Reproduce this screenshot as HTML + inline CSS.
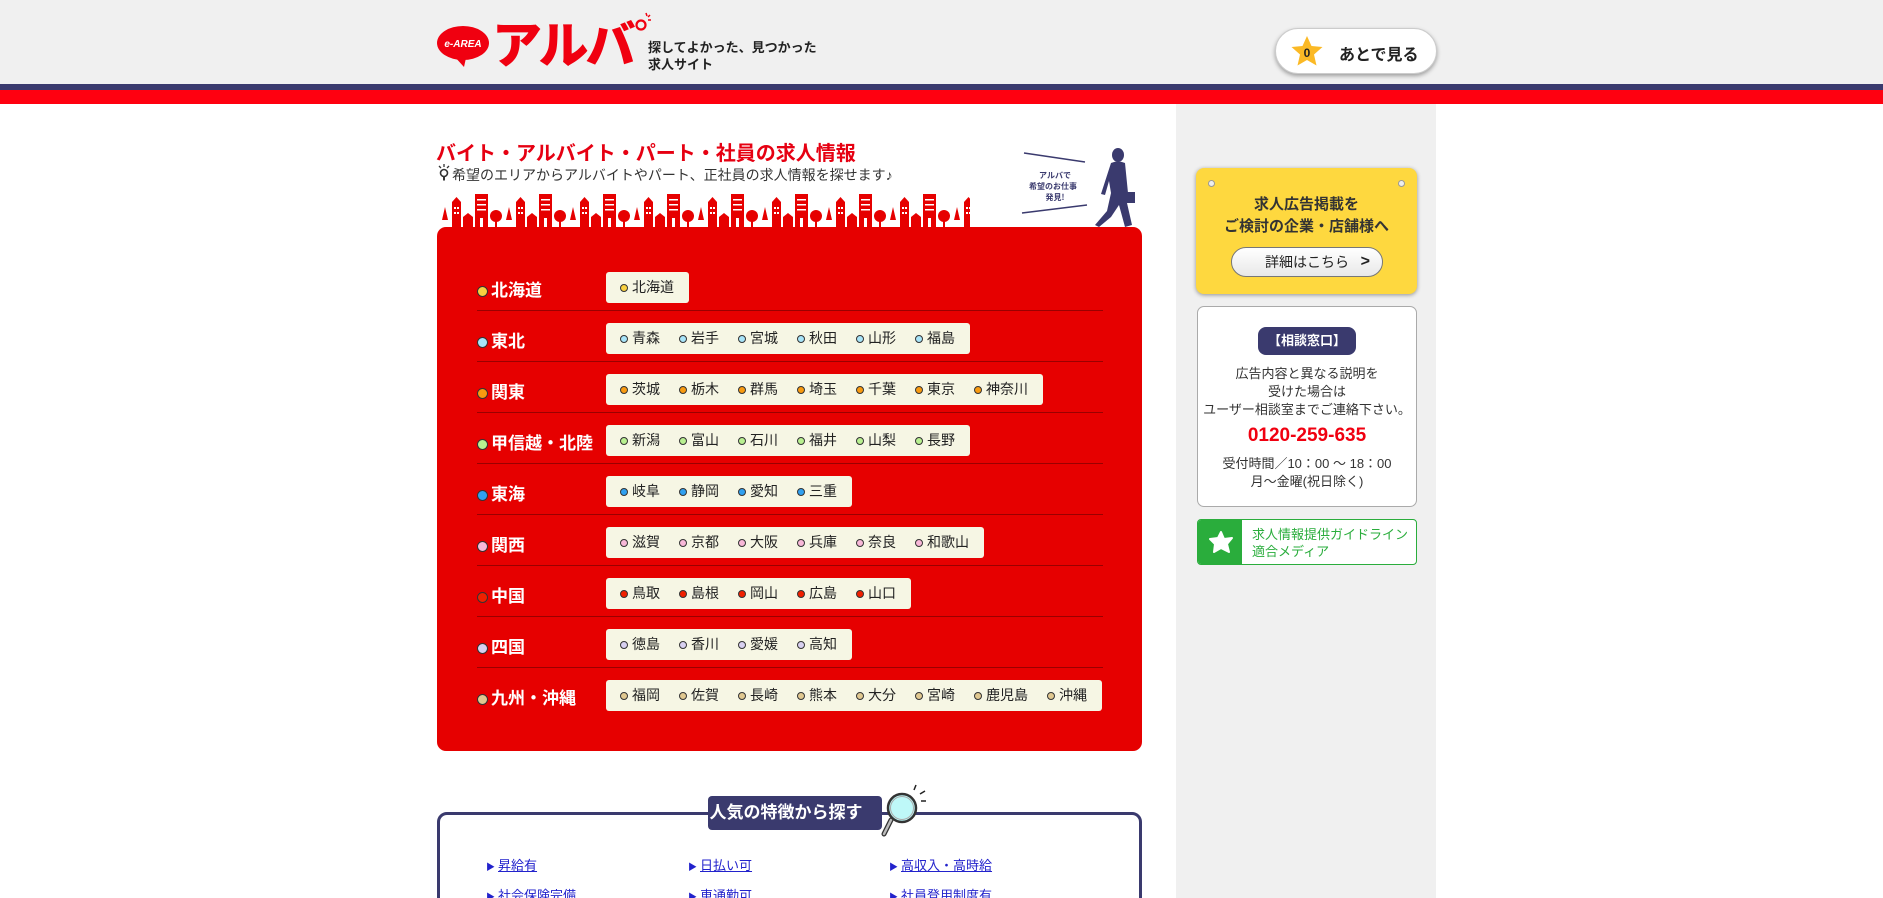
<!DOCTYPE html>
<html><head><meta charset="utf-8">
<style>
*{margin:0;padding:0;box-sizing:border-box}
html,body{width:1883px;height:898px;overflow:hidden}
body{background:#fff;font-family:"Liberation Sans","Noto Sans CJK JP",sans-serif;position:relative;color:#222}
.hdr{position:absolute;left:0;top:0;width:1883px;height:84px;background:#f0f0f0}
.navy{position:absolute;left:0;top:84px;width:1883px;height:6px;background:#3a3a6e}
.red{position:absolute;left:0;top:90px;width:1883px;height:14px;background:#ff0010}
.side{position:absolute;left:1176px;top:104px;width:260px;height:794px;background:#f0f0f0}
.abs{position:absolute}
.logo-txt{position:absolute;left:492px;top:14px;font-size:50px;font-weight:900;color:#f00010;letter-spacing:-3px;font-family:"Noto Sans CJK JP",sans-serif;line-height:56px}
.tag{position:absolute;left:648px;top:39px;font-size:13px;font-weight:bold;line-height:17px;color:#222}
.later{position:absolute;left:1275px;top:28px;width:162px;height:46px;border-radius:23px;background:#fff;border:1px solid #ccc;box-shadow:0 2px 4px rgba(0,0,0,.35);font-size:16px;font-weight:bold}
.title{position:absolute;left:436px;top:137px;font-size:20px;font-weight:bold;color:#e60012}
.sub{position:absolute;left:452px;top:165px;font-size:14px;color:#333}
.rbox{position:absolute;left:437px;top:227px;width:705px;height:524px;background:#e60000;border-radius:9px}
.row{position:absolute;left:40px;width:626px;height:51px;border-bottom:1px solid #9a0000}
.lab{position:absolute;left:0;top:21px;font-size:17px;font-weight:bold;color:#fff;line-height:20px}
.dot{display:inline-block;width:11px;height:11px;border-radius:50%;border:1px solid #333;vertical-align:-1px;margin-right:3px}
.pill{position:absolute;left:129px;top:12px;height:31px;background:#f6f6e4;border-radius:3px;padding:0 15px 0 14px;font-size:14px;line-height:31px;white-space:nowrap;color:#222}
.pill span{display:inline-block;margin-right:19px}
.pill span:last-child{margin-right:0}
.pill .d{display:inline-block;width:8px;height:8px;border-radius:50%;border:1px solid #333;margin-right:4px;vertical-align:0px}
.feat{position:absolute;left:437px;top:812px;width:705px;height:120px;border:3px solid #3a3a6e;border-radius:10px}
.ftab{position:absolute;left:708px;top:796px;width:174px;height:34px;background:#3a3a6e;border-radius:4px;color:#fff;font-size:17px;font-weight:bold;line-height:34px;text-align:center;padding-right:18px;white-space:nowrap}
.lk{position:absolute;font-size:13px;color:#2222cc;text-decoration:underline}
.lk:before{content:"▶";font-size:9px;text-decoration:none;display:inline-block;margin-right:3px;color:#2222cc}
</style></head><body>
<div class="hdr"></div><div class="navy"></div><div class="red"></div><div class="side"></div>

<svg class="abs" style="left:436px;top:24px" width="56" height="44" viewBox="0 0 56 44">
<ellipse cx="27" cy="19" rx="26" ry="17" fill="#f00010"/>
<path d="M18 32 L30 34 L28 43 Z" fill="#f00010"/>
<text x="27" y="23" font-size="10" font-weight="bold" font-style="italic" fill="#fff" text-anchor="middle" font-family="Liberation Sans">e-AREA</text>
</svg>
<div class="logo-txt">アルバ</div>
<svg class="abs" style="left:632px;top:10px" width="22" height="24"><circle cx="9" cy="15" r="4.5" fill="#f0f0f0" stroke="#f00010" stroke-width="2.2"/><path d="M14 3 l1 3 M18 5 l-2 2 M19 10 l-3 0" stroke="#f00010" stroke-width="1.5"/></svg>
<div class="tag">探してよかった、見つかった<br>求人サイト</div>

<div class="later">
<svg class="abs" style="left:14px;top:6px" width="34" height="32" viewBox="0 0 34 32"><path d="M17 1 L21.5 11 L32.5 12 L24 19.5 L26.5 30.5 L17 25 L7.5 30.5 L10 19.5 L1.5 12 L12.5 11 Z" fill="#fbb925"/><text x="17" y="22" font-size="12" font-weight="bold" text-anchor="middle" fill="#222" font-family="Liberation Sans">0</text></svg>
<span class="abs" style="left:63px;top:12px">あとで見る</span>
</div>

<div class="title">バイト・アルバイト・パート・社員の求人情報</div>
<svg class="abs" style="left:437px;top:164px" width="14" height="18"><path d="M2 2l2 2M7 0v3M12 2l-2 2" stroke="#333" stroke-width="1.3"/><circle cx="7" cy="9" r="3.5" fill="none" stroke="#333" stroke-width="1.6"/><path d="M7 12.5v4" stroke="#333" stroke-width="2"/></svg>
<div class="sub">希望のエリアからアルバイトやパート、正社員の求人情報を探せます♪</div>

<svg class="abs" style="left:440px;top:190px" width="540" height="38">
<defs><pattern id="sk" x="10" y="0" width="64" height="38" patternUnits="userSpaceOnUse">
<rect x="2" y="12" width="9" height="26" fill="#e60000"/><path d="M2 12 L6.5 7 L11 12Z" fill="#e60000"/>
<rect x="13" y="27" width="10" height="11" fill="#e60000"/><path d="M13 27 L18 23 L23 27Z" fill="#e60000"/>
<rect x="25" y="4" width="13" height="34" fill="#e60000"/>
<circle cx="46" cy="26" r="6" fill="#e60000"/><rect x="45" y="30" width="2" height="8" fill="#e60000"/>
<path d="M56 30 L59 17 L62 30Z" fill="#e60000"/>
<g fill="#fff"><rect x="4" y="17" width="2" height="2"/><rect x="7" y="17" width="2" height="2"/><rect x="4" y="22" width="2" height="2"/><rect x="7" y="22" width="2" height="2"/><rect x="27" y="9" width="9" height="1.5"/><rect x="27" y="14" width="9" height="1.5"/><rect x="27" y="19" width="9" height="1.5"/><rect x="30" y="28" width="3" height="10"/></g>
</pattern></defs>
<rect x="0" y="0" width="530" height="38" fill="url(#sk)"/>
</svg>
<svg class="abs" style="left:1015px;top:145px" width="120" height="85">
<path d="M9 8 L70 17 M7 68 L72 60" stroke="#3a3a6e" stroke-width="1.5"/>
<text x="40" y="33" font-size="8" font-weight="bold" fill="#3a3a6e" text-anchor="middle" font-family="Noto Sans CJK JP">アルバで</text>
<text x="38" y="44" font-size="8" font-weight="bold" fill="#3a3a6e" text-anchor="middle" font-family="Noto Sans CJK JP">希望のお仕事</text>
<text x="40" y="55" font-size="8" font-weight="bold" fill="#3a3a6e" text-anchor="middle" font-family="Noto Sans CJK JP">発見!</text>
<ellipse cx="103" cy="10" rx="6" ry="7" fill="#3a3a6e"/>
<path d="M96 18 Q103 15 110 18 L113 48 L112 58 L117 80 L110 82 L104 60 L96 72 L84 82 L80 80 L92 66 L96 48 L94 36 L90 50 L86 49 Z" fill="#3a3a6e"/>
<rect x="108" y="47" width="13" height="11" fill="#3a3a6e"/>
</svg>

<div class="rbox">
<div class="row" style="top:33px"><div class="lab"><span class="dot" style="background:#f8d040"></span>北海道</div><div class="pill"><span><i class="d" style="background:#f8d040"></i>北海道</span></div></div>
<div class="row" style="top:84px"><div class="lab"><span class="dot" style="background:#a8e4f8"></span>東北</div><div class="pill"><span><i class="d" style="background:#a8e4f8"></i>青森</span><span><i class="d" style="background:#a8e4f8"></i>岩手</span><span><i class="d" style="background:#a8e4f8"></i>宮城</span><span><i class="d" style="background:#a8e4f8"></i>秋田</span><span><i class="d" style="background:#a8e4f8"></i>山形</span><span><i class="d" style="background:#a8e4f8"></i>福島</span></div></div>
<div class="row" style="top:135px"><div class="lab"><span class="dot" style="background:#f89a10"></span>関東</div><div class="pill"><span><i class="d" style="background:#f89a10"></i>茨城</span><span><i class="d" style="background:#f89a10"></i>栃木</span><span><i class="d" style="background:#f89a10"></i>群馬</span><span><i class="d" style="background:#f89a10"></i>埼玉</span><span><i class="d" style="background:#f89a10"></i>千葉</span><span><i class="d" style="background:#f89a10"></i>東京</span><span><i class="d" style="background:#f89a10"></i>神奈川</span></div></div>
<div class="row" style="top:186px"><div class="lab"><span class="dot" style="background:#b8f090"></span>甲信越・北陸</div><div class="pill"><span><i class="d" style="background:#b8f090"></i>新潟</span><span><i class="d" style="background:#b8f090"></i>富山</span><span><i class="d" style="background:#b8f090"></i>石川</span><span><i class="d" style="background:#b8f090"></i>福井</span><span><i class="d" style="background:#b8f090"></i>山梨</span><span><i class="d" style="background:#b8f090"></i>長野</span></div></div>
<div class="row" style="top:237px"><div class="lab"><span class="dot" style="background:#30a0f0"></span>東海</div><div class="pill"><span><i class="d" style="background:#30a0f0"></i>岐阜</span><span><i class="d" style="background:#30a0f0"></i>静岡</span><span><i class="d" style="background:#30a0f0"></i>愛知</span><span><i class="d" style="background:#30a0f0"></i>三重</span></div></div>
<div class="row" style="top:288px"><div class="lab"><span class="dot" style="background:#f8b8d8"></span>関西</div><div class="pill"><span><i class="d" style="background:#f8b8d8"></i>滋賀</span><span><i class="d" style="background:#f8b8d8"></i>京都</span><span><i class="d" style="background:#f8b8d8"></i>大阪</span><span><i class="d" style="background:#f8b8d8"></i>兵庫</span><span><i class="d" style="background:#f8b8d8"></i>奈良</span><span><i class="d" style="background:#f8b8d8"></i>和歌山</span></div></div>
<div class="row" style="top:339px"><div class="lab"><span class="dot" style="background:#f02000"></span>中国</div><div class="pill"><span><i class="d" style="background:#f02000"></i>鳥取</span><span><i class="d" style="background:#f02000"></i>島根</span><span><i class="d" style="background:#f02000"></i>岡山</span><span><i class="d" style="background:#f02000"></i>広島</span><span><i class="d" style="background:#f02000"></i>山口</span></div></div>
<div class="row" style="top:390px"><div class="lab"><span class="dot" style="background:#d8d0f0"></span>四国</div><div class="pill"><span><i class="d" style="background:#d8d0f0"></i>徳島</span><span><i class="d" style="background:#d8d0f0"></i>香川</span><span><i class="d" style="background:#d8d0f0"></i>愛媛</span><span><i class="d" style="background:#d8d0f0"></i>高知</span></div></div>
<div class="row" style="top:441px;border-bottom:none"><div class="lab"><span class="dot" style="background:#e0c890"></span>九州・沖縄</div><div class="pill"><span><i class="d" style="background:#e0c890"></i>福岡</span><span><i class="d" style="background:#e0c890"></i>佐賀</span><span><i class="d" style="background:#e0c890"></i>長崎</span><span><i class="d" style="background:#e0c890"></i>熊本</span><span><i class="d" style="background:#e0c890"></i>大分</span><span><i class="d" style="background:#e0c890"></i>宮崎</span><span><i class="d" style="background:#e0c890"></i>鹿児島</span><span><i class="d" style="background:#e0c890"></i>沖縄</span></div></div>
</div>

<div class="feat"></div>
<div class="ftab">人気の特徴から探す</div>
<svg class="abs" style="left:878px;top:784px" width="60" height="56"><path d="M36 6l2-5M42 10l5-3M43 17l5 0" stroke="#222" stroke-width="1.5"/><path d="M13 36 L6 50" stroke="#333" stroke-width="5" stroke-linecap="round"/><path d="M13 36 L6 50" stroke="#bbb" stroke-width="2.5" stroke-linecap="round"/><circle cx="24" cy="24" r="14" fill="#bef8f8" stroke="#333" stroke-width="2.5"/><circle cx="24" cy="24" r="11.5" fill="none" stroke="#aaa" stroke-width="1"/></svg>
<a class="lk" style="left:486px;top:855px">昇給有</a>
<a class="lk" style="left:688px;top:855px">日払い可</a>
<a class="lk" style="left:889px;top:855px">高収入・高時給</a>
<a class="lk" style="left:486px;top:885px">社会保険完備</a>
<a class="lk" style="left:688px;top:885px">車通勤可</a>
<a class="lk" style="left:889px;top:885px">社員登用制度有</a>

<div class="abs" style="left:1196px;top:168px;width:221px;height:126px;background:#fed83f;border-radius:8px;box-shadow:0 1px 4px rgba(0,0,0,.4)">
<i class="abs" style="left:12px;top:12px;width:7px;height:7px;border-radius:50%;background:#eee;border:1px solid #999"></i>
<i class="abs" style="left:202px;top:12px;width:7px;height:7px;border-radius:50%;background:#eee;border:1px solid #999"></i>
<div class="abs" style="left:0;top:26px;width:221px;text-align:center;font-size:15px;font-weight:bold;line-height:22px;color:#333">求人広告掲載を<br>ご検討の企業・店舗様へ</div>
<div class="abs" style="left:35px;top:79px;width:152px;height:30px;border-radius:15px;background:linear-gradient(#fff,#e8e8e8);border:1px solid #777;font-size:14px;line-height:28px;padding-left:33px;color:#222">詳細はこちら<b class="abs" style="right:12px;top:0;font-size:16px">&gt;</b></div>
</div>
<div class="abs" style="left:1197px;top:306px;width:220px;height:201px;background:#fff;border:1px solid #aaa;border-radius:7px;text-align:center;color:#333">
<div class="abs" style="left:60px;top:20px;width:98px;height:28px;background:#3a3a6e;border-radius:8px;color:#fff;font-size:13px;font-weight:bold;line-height:28px">【相談窓口】</div>
<div class="abs" style="left:0;top:58px;width:218px;font-size:13px;line-height:18px">広告内容と異なる説明を<br>受けた場合は<br>ユーザー相談室までご連絡下さい。</div>
<div class="abs" style="left:0;top:118px;width:218px;font-size:19px;font-weight:bold;color:#f00010">0120-259-635</div>
<div class="abs" style="left:0;top:148px;width:218px;font-size:13px;line-height:18px">受付時間／10：00 ～ 18：00<br>月～金曜(祝日除く)</div>
</div>
<div class="abs" style="left:1197px;top:519px;width:220px;height:46px;background:#fff;border:1px solid #2aad3c;border-radius:4px;overflow:hidden">
<div class="abs" style="left:0;top:0;width:44px;height:46px;background:#2aad3c"></div>
<svg class="abs" style="left:11px;top:11px" width="24" height="22"><path d="M12 1 L15 8 L23 7 L18 13 L20 21 L12 17 L5 21 L6 13 L1 8 L9 7 Z" fill="#fff" stroke="#fff" stroke-linejoin="round" stroke-width="2"/></svg>
<div class="abs" style="left:54px;top:6px;font-size:13px;line-height:17px;color:#2aad3c">求人情報提供ガイドライン<br>適合メディア</div>
</div>
</body></html>
